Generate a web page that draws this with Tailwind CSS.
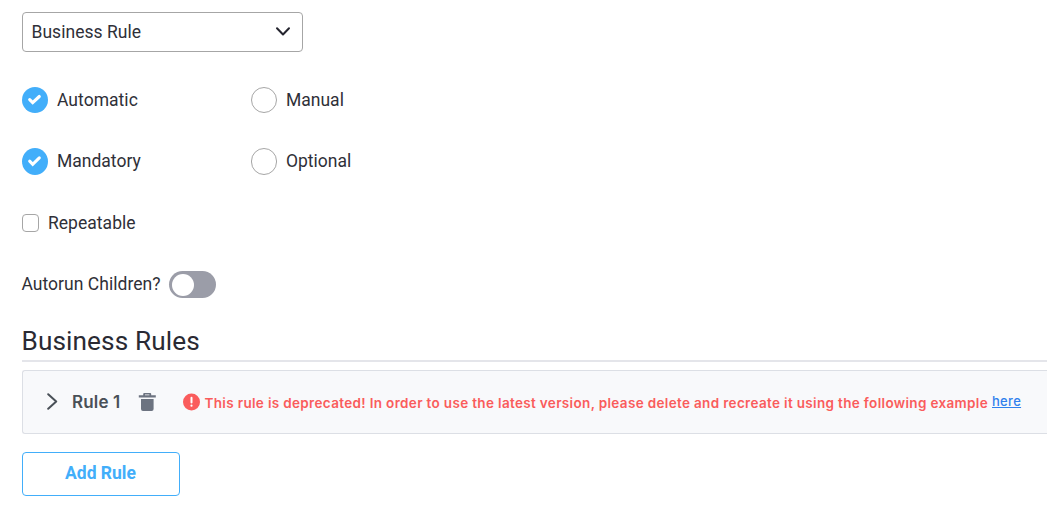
<!DOCTYPE html>
<html lang="en">
<head>
<meta charset="utf-8">
<title>Business Rules</title>
<script src="https://cdn.jsdelivr.net/npm/@tailwindcss/browser@4"></script>
</head>
<body class="h-[524px] overflow-hidden bg-white pl-[22px] pt-3 font-['Roboto',sans-serif] text-[17.5px] text-[#2f3038]">
<main class="flex flex-col">
  <button class="flex h-10 w-[281px] items-center justify-between rounded-[4px] border border-[#a6a6a6] pl-[8.5px] pr-[11px]">
    <span class="tracking-[0.03px]">Business Rule</span>
    <svg class="h-4 w-4" viewBox="0 0 16 16" fill="none" stroke="#25252f" stroke-width="2" stroke-linecap="round" stroke-linejoin="round"><path d="M2 4.300 8 10.500l6-6.200"/></svg>
  </button>

  <div class="mt-[35px] flex h-[26px] items-center">
    <label class="flex w-[229px] items-center gap-[9px]">
      <svg class="size-[26px]" viewBox="0 0 26 26" fill="none"><circle cx="13" cy="13" r="13" fill="#42aefa"/><path d="m7.700 12.700 3 3 6.600-6.200" stroke="#fff" stroke-width="3.100" stroke-linecap="round"/></svg>
      <span class="tracking-[0.04px]">Automatic</span>
    </label>
    <label class="flex items-center gap-[9px]"><span class="size-[26px] rounded-full border border-[#a6a6a6]"></span><span>Manual</span></label>
  </div>
  <div class="mt-[35px] flex h-[26px] items-center">
    <label class="flex w-[229px] items-center gap-[9px]">
      <svg class="h-[27px] w-[26px]" viewBox="0 0 26 26" preserveAspectRatio="none" fill="none"><circle cx="13" cy="13" r="13" fill="#42aefa"/><path d="m7.700 12.700 3 3 6.600-6.200" stroke="#fff" stroke-width="3.100" stroke-linecap="round"/></svg>
      <span>Mandatory</span>
    </label>
    <label class="flex items-center gap-[9px]"><span class="h-[27px] w-[26px] rounded-full border border-[#a6a6a6]"></span><span>Optional</span></label>
  </div>

  <label class="mt-[36px] flex h-[26px] items-center gap-[9px]">
    <span class="h-[18px] w-[17px] rounded-[4px] border border-[#a6a6a6]"></span><span class="tracking-[0.03px]">Repeatable</span>
  </label>

  <div class="mt-[35px] flex h-[27px] items-center">
    <span class="-ml-[0.5px] w-[147.5px] whitespace-nowrap tracking-[0.03px]">Autorun Children?</span>
    <span class="flex h-[27px] w-[47px] items-center rounded-full bg-[#9b9da8] pl-[3px]"><span class="size-[22px] rounded-full bg-white"></span></span>
  </div>

  <h2 class="mt-[21px] flex h-[43px] items-center border-b-2 border-[#e4e5ea] pt-1 text-[26.2px] tracking-[0.1px] text-[#2a2a33]"><span class="-ml-[0.500px]">Business Rules</span></h2>

  <section class="mt-2 flex h-16 items-center rounded-l-[3px] border border-r-0 border-[#dcdfe5] bg-[#f8f9fb] pl-[22px] font-['Inter',sans-serif]">
    <svg class="h-[18px] w-[14px]" viewBox="0 0 14 18" fill="none" stroke="#495057" stroke-width="2" stroke-linecap="round" stroke-linejoin="round"><path d="m3.200 1.200 8 7.300-8 7.300"/></svg>
    <span class="ml-[13px] w-[66px] pt-px text-[17px] font-semibold tracking-[0.150px] text-[#495057]">Rule 1</span>
    <svg class="h-[18px] w-[18px]" viewBox="0 0 18 18" fill="#6c7380"><path d="M5.200 2.300V1q0-1 1-1h6q1 0 1 1v1.300h4.600v2.200H.8V2.300h4.400Zm1.800 0h4.400V1.600H7V2.300ZM3 6h12.600v10q0 2-2 2H5q-2 0-2-2Z"/></svg>
    <svg class="ml-[26px] h-[18px] w-[18px]" viewBox="0 0 18 18"><circle cx="9.500" cy="9" r="8.500" fill="#fa5c5c"/><path d="M9.500 4.800v4.700" stroke="#fff" stroke-width="2" stroke-linecap="round"/><circle cx="9.500" cy="12.700" r="1.100" fill="#fff"/></svg>
    <span class="ml-[4.500px] w-[787.500px] whitespace-nowrap pt-[2px] text-[13.500px] font-semibold tracking-[0.335px] text-[#fa5c5c]">This rule is deprecated! In order to use the latest version, please delete and recreate it using the following example</span>
    <a class="text-[13px] font-medium tracking-[0.300px] text-[#2f80ed] underline">here</a>
  </section>

  <button class="mt-[18px] flex h-11 w-[158px] items-center justify-center rounded-[4px] border border-[#42aefa] pb-[2px] pr-px text-[17.500px] font-bold text-[#42aefa]">Add Rule</button>
</main>
</body>
</html>
